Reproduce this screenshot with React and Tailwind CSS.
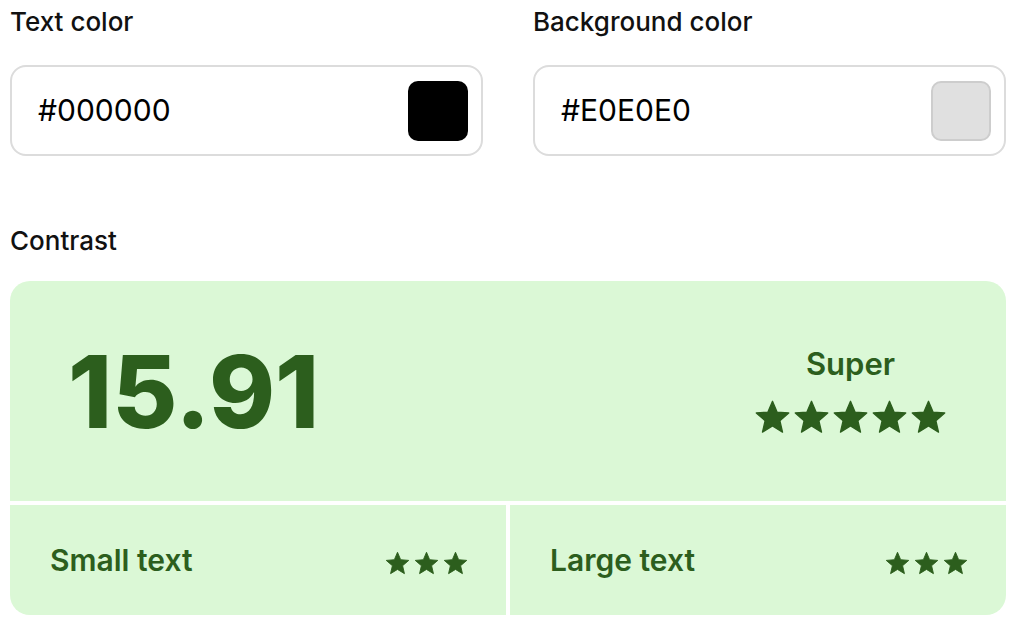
import React from 'react';

const green = 'text-[#2c5e1d]';

const Star = ({ size }) => (
  <svg width={size} height={size} viewBox="0 0 24 24" fill="currentColor">
    <path
      d="M12 17.27L18.18 21l-1.64-7.03L22 9.24l-7.19-.61L12 2 9.19 8.63 2 9.24l5.46 4.73L5.82 21z"
      stroke="currentColor"
      strokeWidth="0.8"
      strokeLinejoin="round"
    />
  </svg>
);

const Stars = ({ count, size, className }) => (
  <div className={`flex ${className}`}>
    {Array.from({ length: count }).map((_, i) => (
      <Star key={i} size={size} />
    ))}
  </div>
);

const ColorField = ({ label, value, swatch }) => (
  <div className="flex flex-col">
    <div className="text-[26px] leading-[36px] font-medium text-[#111]">{label}</div>
    <div className="mt-[25px] h-[91px] flex items-center justify-between rounded-[16px] border-2 border-[#dcdcdc] bg-white pl-[26px] pr-[13px]">
      <span className="text-[30px] text-black">{value}</span>
      <div className={`w-[60px] h-[60px] rounded-[10px] ${swatch}`} />
    </div>
  </div>
);

export default function App() {
  return (
    <div className="w-full min-h-screen bg-white px-[10px] pt-[4px]" style={{ fontFamily: 'Inter, "Noto Sans", sans-serif' }}>
      <div className="grid grid-cols-2 gap-[50px]">
        <ColorField label="Text color" value="#000000" swatch="bg-black" />
        <ColorField label="Background color" value="#E0E0E0" swatch="bg-[#e0e0e0] border-2 border-[#cdcdcd]" />
      </div>

      <div className="mt-[67px] text-[26px] leading-[36px] font-medium text-[#111]">Contrast</div>

      <div className="mt-[22px] flex flex-col gap-[4px]">
        <div className={`h-[220px] rounded-t-[20px] bg-[#dbf8d6] flex items-center justify-between pl-[58px] pr-[58px] ${green}`}>
          <div className="text-[100px] font-extrabold leading-none mt-[2px]">15.91</div>
          <div className="flex flex-col items-center">
            <div className="text-[31px] font-semibold leading-[36px]">Super</div>
            <Stars count={5} size={39} className="mt-[16px]" />
          </div>
        </div>
        <div className="grid grid-cols-2 gap-[4px]">
          <div className={`h-[110px] rounded-bl-[20px] bg-[#dbf8d6] flex items-center justify-between pl-[40px] pr-[37px] ${green}`}>
            <span className="text-[30px] font-semibold">Small text</span>
            <Stars count={3} size={27} className="gap-[2px] mt-[6px]" />
          </div>
          <div className={`h-[110px] rounded-br-[20px] bg-[#dbf8d6] flex items-center justify-between pl-[40px] pr-[37px] ${green}`}>
            <span className="text-[30px] font-semibold">Large text</span>
            <Stars count={3} size={27} className="gap-[2px] mt-[6px]" />
          </div>
        </div>
      </div>
    </div>
  );
}
